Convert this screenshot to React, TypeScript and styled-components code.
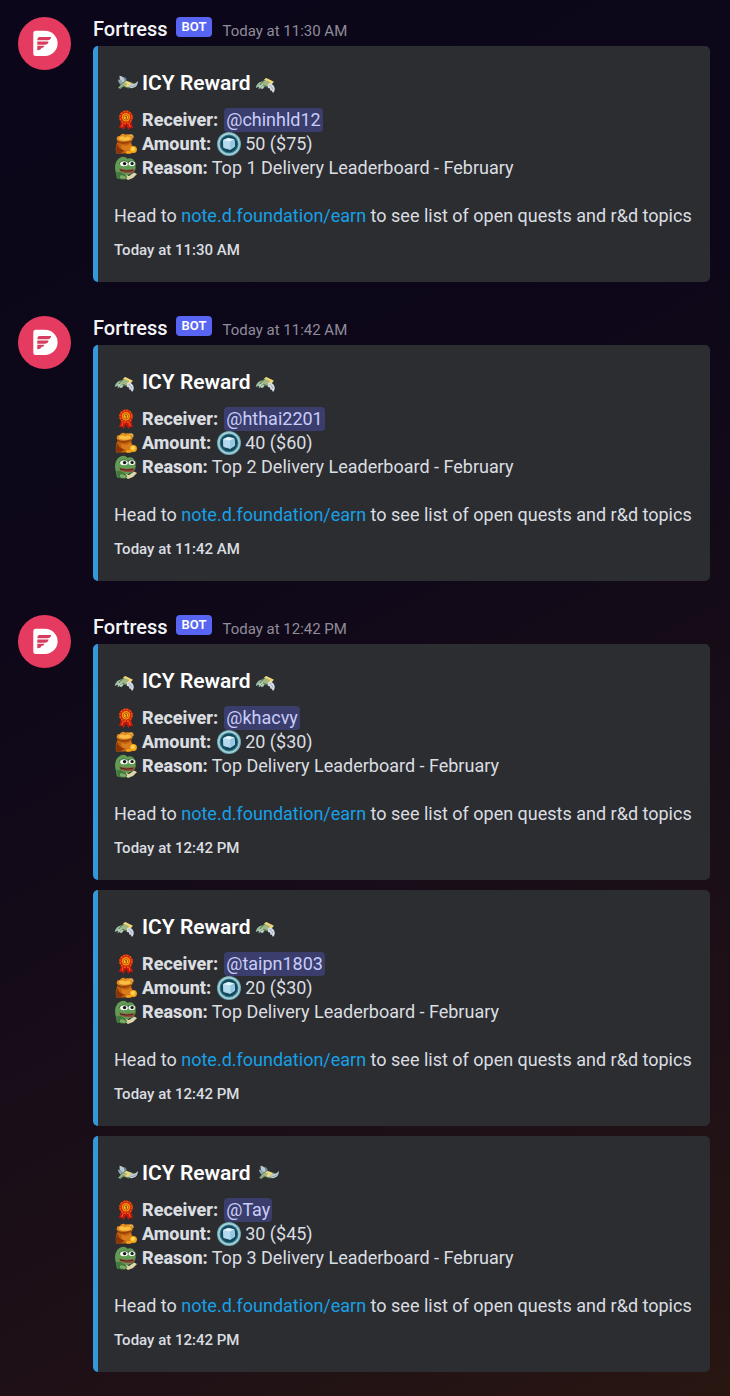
import React from 'react';
import styled, { createGlobalStyle } from 'styled-components';

const GlobalStyle = createGlobalStyle`
  *, *::before, *::after { box-sizing: border-box; }
  body {
    margin: 0;
    min-height: 100vh;
    background: linear-gradient(152deg, #0c061a 0%, #0d0719 35%, #180d18 62%, #1f1116 82%, #281611 100%);
    color: #dbdee1;
    font-family: Roboto, 'Liberation Sans', sans-serif;
    font-size: 18px;
    line-height: 24px;
  }
`;

const Feed = styled.main`
  display: flex;
  flex-direction: column;
  gap: 34px;
  padding: 17px 20px 24px 18px;
`;

const Message = styled.article`
  display: flex;
  align-items: flex-start;
  gap: 22px;
`;

const Avatar = styled.svg`
  flex: none;
  width: 53px;
  height: 53px;
`;

const Content = styled.div`
  flex: 1;
  min-width: 0;
`;

const Header = styled.header`
  display: flex;
  align-items: center;
  height: 24px;
  margin-bottom: 5px;
`;

const Author = styled.h2`
  margin: 0 8px 0 0;
  color: #f4f5f8;
  font-size: 20px;
  font-weight: 500;
`;

const BotTag = styled.span`
  align-self: flex-start;
  padding: 0 6px;
  border-radius: 4px;
  background: #5865f2;
  color: #fff;
  font-size: 13px;
  font-weight: 600;
  line-height: 20px;
`;

const Time = styled.time`
  margin: 3px 0 0 10px;
  color: #8f8c99;
  font-size: 15px;
`;

const Embeds = styled.div`
  display: flex;
  flex-direction: column;
  gap: 10px;
`;

const Card = styled.section`
  padding: 23px 16px 22px;
  border-left: 5px solid #3498db;
  border-radius: 5px;
  background: #2c2d31;
`;

const Title = styled.h3`
  display: flex;
  align-items: center;
  gap: 4px;
  margin: 0 0 10px;
  color: #fff;
  font-size: 21px;
  font-weight: 600;
  line-height: 29px;
`;

const Row = styled.div`
  display: flex;
  align-items: center;
  gap: 4px;
  height: 24px;
`;

const Label = styled.strong<{ $wide?: boolean }>`
  margin-right: ${({ $wide }) => ($wide ? '2px' : '0')};
  font-weight: 800;
`;

const Mention = styled.a`
  padding: 0 2px;
  border-radius: 4px;
  background: #3b3e6c;
  color: #c9cdfb;
  text-decoration: none;
`;

const Note = styled.p`
  margin: 24px 0 12px;
`;

const NoteLink = styled.a`
  color: #17a0e6;
  text-decoration: none;
`;

const Footer = styled.footer`
  font-size: 15px;
  font-weight: 500;
  line-height: 20px;
`;

const Emoji = styled.svg`
  flex: none;
  width: 24px;
  height: 24px;
`;

const FortressLogo = () => (
  <Avatar viewBox="0 0 53 53" role="img" aria-label="Fortress">
    <circle cx="26.5" cy="26.5" r="26.500" fill="#e63b60" />
    <path d="M17.800 13.800h9.200a12.500 12.500 0 0 1 0 25.200h-9.200q-2.500 0-2.500-2.500V16.300q0-2.500 2.500-2.500Z" fill="#fff" />
    <path d="M21.500 20h11.700q-.6 3.300-3.700 3.300H19.300q.2-3.300 2.200-3.300ZM19.300 24.500h11.300q-.7 3.200-3.900 3.200h-7.400ZM19.300 28.800h7.200q-.7 2.200-3.200 2.200-.5 2.200-4 2.200Z" fill="#d63c5d" />
  </Avatar>
);

const FlyingMoney = () => (
  <Emoji viewBox="0 0 24 24" aria-hidden="true">
    <path d="M5.500 3.700c3 .3 5 2 6 5.300l-2.200 3C7 10.500 5.200 7.600 5.500 3.700Z" fill="#b9c9d3" />
    <path d="M4 7.500c2.200.2 4 1 5.500 3.500L8 13C5.500 12 4.200 10.500 4 7.500Z" fill="#8ea6b2" />
    <path d="M10 5c1.700.5 2.600 1.800 2.800 3.700l-2 .7Z" fill="#6c8898" />
    <path d="m5.500 13.200 6-4.700 9.200 2.800-5.900 5.400Z" fill="#587a50" />
    <path d="m7 12.800 4.800-3.500 7.400 2.200-4.800 4Z" fill="#a3b886" />
    <path d="m10.200 10.400 2.600-1.500 4.700 2-3.500 4.200-3-.8 2.400-2.600Z" fill="#f0d67e" />
    <path d="m4 16 3.200-3.300 2.700 1.200-3.100 2.800Z" fill="#9fb89c" />
    <path d="m6 16.300 2.500-2" stroke="#54734e" strokeWidth=".8" />
    <path d="M16.500 12.300c3.300.3 5.300-1 7.300-3.300.2 4.400-2.300 7-6.800 7.200l-2.200-1.400Z" fill="#c6d3db" />
    <path d="M16.300 14.300c2.600.5 4.600-.5 6.200-2" fill="none" stroke="#7e949f" strokeWidth=".8" />
  </Emoji>
);

const DivingMoney = () => (
  <Emoji viewBox="0 0 24 24" aria-hidden="true">
    <path d="M.8 16C1.500 12 4 9.500 8 9.500l2.500 4-2.800 3.700-2-1.700-2 2 .2-2.700Z" fill="#9dbea4" />
    <path d="m4.500 12.500 6-6.200 8.300 3.200-5 6.500Z" fill="#557a4e" />
    <path d="m6 12 5-4.700 6.500 2.500-4.200 4.700Z" fill="#a2b680" />
    <path d="m9 7.600 2.300-1.600 7.500 3.800-2.800 3.400-2.500-.7 1.700-2.400Z" fill="#f5d678" />
    <path d="m4 14.500 3.500-3 1.200 3-2.500 2.500Z" fill="#c2d4c6" />
    <path d="m5.500 15.500 2.200-2.300" stroke="#5d8262" strokeWidth=".8" />
    <path d="M13 12c3.500-.9 6.300 1.200 6.700 4.300.2 2-.5 3.800-1.700 4.700l-1.200-2.200-1.500-.2-.3-2-2-.6Z" fill="#d4dbe5" />
    <path d="M14.500 13.500c1.900.4 2.700 1.800 3.200 4" fill="none" stroke="#91a0ae" strokeWidth=".8" />
  </Emoji>
);

const Medal = () => (
  <Emoji viewBox="0 0 24 24" aria-hidden="true">
    <path d="m7.500 12-2.500 8 3 .1 1.700 2 2.300-5 2.300 5 1.700-2 3-.1-2.500-8Z" fill="#c5160c" />
    <path d="m7.800 19 1.500-4M16.200 19l-1.500-4" stroke="#f36722" strokeWidth="1" />
    <circle cx="12" cy="9.300" r="6.800" fill="#cc2409" />
    <circle cx="12" cy="9.300" r="6" fill="none" stroke="#ee5410" strokeWidth="1.500" strokeDasharray="2 1.100" />
    <circle cx="12" cy="9.300" r="4.200" fill="#f39613" />
    <circle cx="12" cy="9.300" r="2.700" fill="#f9b91d" stroke="#c95a0a" />
    <path d="M11.200 8.500 12.300 8v3" fill="none" stroke="#9d3907" />
  </Emoji>
);

const MoneyBag = () => (
  <Emoji viewBox="0 0 24 24" aria-hidden="true">
    <path d="M4 9C1.800 12.500 1.200 17.500 2.200 21.500h16c1.500-4 .3-9.500-2-12.500Z" fill="#c0600f" />
    <path d="M3.500 12c-1.700 3-1.700 6.500-1 9 3.500.5 6.500-.3 7.500-3-3.500-.2-5.500-2.500-6.500-6Z" fill="#8b3406" />
    <path d="M7 12.500c3.500 2 7 1.500 9.500-1 1.500 2.500 1.800 5 .8 7-4 1-8 0-9.500-1.800Z" fill="#d97c1c" />
    <path d="M2.800 8C2.200 5 3.800 3.500 6 4c1-2.300 4-2.800 5.500-1.300C14 1.500 18.500 2.500 18.800 5.500c0 2.500-1 4-3 5-4.500 1.500-9.500 1-13-2.500Z" fill="#e08a20" />
    <path d="M4.500 6q3.500-3 6.500-.5 3-2 6 .5l-.8 2q-6 1.700-10.500-.3Z" fill="#f9bd42" />
    <path d="m3 8.300 1.200 2.500q6 2.500 12-.5L18 8Q10.500 11.500 3 8.300Z" fill="#9a4209" />
    <path d="M15 4q2-2 3.500-.5l.7 2.300" fill="none" stroke="#f3b54a" strokeWidth="1.300" />
    <circle cx="19.400" cy="17.500" r="3.500" fill="#f7a916" />
    <circle cx="18.900" cy="17" r="2" fill="#ffd65d" />
    <ellipse cx="14.500" cy="20.400" rx="2.800" ry="1.400" fill="#f3a61e" />
  </Emoji>
);

const Frog = () => (
  <Emoji viewBox="0 0 24 24" aria-hidden="true">
    <path d="M1.500 15C.3 9.500 1.800 3.500 6.500 1.500 9.500.2 12 1 13.300 2.800c3-1.300 6.200-.3 6.900 2.500 1.600.8 2 2.500 1.300 4.500.7 3-.5 6-3.500 7.500L9 21.500l-6 1Z" fill="#619c55" />
    <path d="M2 16.500q3-1.500 6.500.5l5 3-3 3H4Z" fill="#44793f" />
    <path d="M5.500 7.700q4-4.700 8.200-1 3.600-2.700 6.900.3" fill="none" stroke="#2b5730" strokeWidth="1.300" />
    <ellipse cx="10" cy="7.800" rx="3.900" ry="2.500" fill="#f4f7f0" />
    <ellipse cx="17.800" cy="7.700" rx="3.200" ry="2.400" fill="#f4f7f0" />
    <circle cx="10.600" cy="7.600" r="1.700" fill="#111713" />
    <circle cx="18.100" cy="7.500" r="1.600" fill="#111713" />
    <path d="M5 12.200q7 2.800 15.500.5l-1 3.800q-7.500 1.500-13-1Z" fill="#9c4b39" />
    <path d="M6 13.900q6.500 2.300 13 .5" fill="none" stroke="#452922" />
    <path d="m12 19 3 1 5-3.500 3 1.500-4 4-5 2-3-2Z" fill="#ded6a8" />
    <path d="M5 19.500q3-2 6 .5l2 1-2 2.500-5-.5Z" fill="#79ad63" stroke="#315d32" strokeWidth=".7" />
  </Emoji>
);

const IcyCoin = () => (
  <Emoji viewBox="0 0 24 24" role="img" aria-label="ICY">
    <circle cx="12" cy="12" r="12" fill="#6fa9b6" />
    <circle cx="12" cy="12" r="10.900" fill="#a9d2d9" />
    <circle cx="12" cy="12" r="9.500" fill="#3c8193" />
    <circle cx="12" cy="12" r="8.500" fill="#13495d" />
    <path d="M6.500 8.200 11 6.300l6 1.300.6 6.800-4.300 3-6.500-1.800Z" fill="#b5daee" stroke="#b5daee" strokeLinejoin="round" />
    <path d="m6.500 8.200 4.500-1.900 6 1.300-4 1.800Z" fill="#e2f3fa" />
    <path d="m13 9.400 4-1.800.6 6.800-4.300 3Z" fill="#97c8e1" />
  </Emoji>
);

type Reward = {
  receiver: string;
  amount: string;
  reason: string;
  time: string;
  icons: [React.FC, React.FC];
};

const RewardCard = ({ receiver, amount, reason, time, icons: [Before, After] }: Reward) => (
  <Card>
    <Title><Before />ICY Reward<After /></Title>
    <Row><Medal /><Label $wide>Receiver:</Label><Mention href="#">@{receiver}</Mention></Row>
    <Row><MoneyBag /><Label $wide>Amount:</Label><IcyCoin /><span>{amount}</span></Row>
    <Row><Frog /><Label>Reason:</Label><span>{reason}</span></Row>
    <Note>
      Head to <NoteLink href="https://note.d.foundation/earn">note.d.foundation/earn</NoteLink> to see list of open quests and r&amp;d topics
    </Note>
    <Footer>{time}</Footer>
  </Card>
);

const messages: { time: string; rewards: Omit<Reward, 'time'>[] }[] = [
  {
    time: 'Today at 11:30 AM',
    rewards: [
      { receiver: 'chinhld12', amount: '50 ($75)', reason: 'Top 1 Delivery Leaderboard - February', icons: [FlyingMoney, DivingMoney] },
    ],
  },
  {
    time: 'Today at 11:42 AM',
    rewards: [
      { receiver: 'hthai2201', amount: '40 ($60)', reason: 'Top 2 Delivery Leaderboard - February', icons: [DivingMoney, DivingMoney] },
    ],
  },
  {
    time: 'Today at 12:42 PM',
    rewards: [
      { receiver: 'khacvy', amount: '20 ($30)', reason: 'Top Delivery Leaderboard - February', icons: [DivingMoney, DivingMoney] },
      { receiver: 'taipn1803', amount: '20 ($30)', reason: 'Top Delivery Leaderboard - February', icons: [DivingMoney, DivingMoney] },
      { receiver: 'Tay', amount: '30 ($45)', reason: 'Top 3 Delivery Leaderboard - February', icons: [FlyingMoney, FlyingMoney] },
    ],
  },
];

export default function App() {
  return (
    <>
      <GlobalStyle />
      <Feed>
        {messages.map((message) => (
          <Message key={message.time}>
            <FortressLogo />
            <Content>
              <Header>
                <Author>Fortress</Author>
                <BotTag>BOT</BotTag>
                <Time>{message.time}</Time>
              </Header>
              <Embeds>
                {message.rewards.map((reward) => (
                  <RewardCard key={reward.receiver} {...reward} time={message.time} />
                ))}
              </Embeds>
            </Content>
          </Message>
        ))}
      </Feed>
    </>
  );
}
